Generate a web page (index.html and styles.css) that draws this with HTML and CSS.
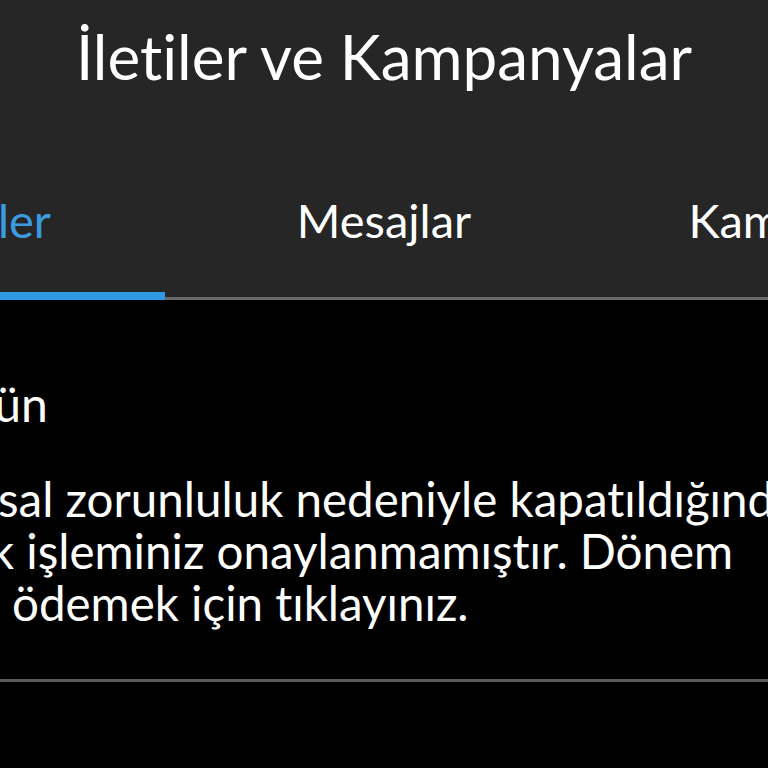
FILE: index.html
```html
<!DOCTYPE html>
<html lang="tr">
<head>
  <meta charset="UTF-8" />
  <meta name="viewport" content="width=device-width, initial-scale=1.0"/>
  <title>İletiler ve Kampanyalar</title>
  <link rel="stylesheet" href="styles.css">
</head>
<body>
  <div class="appbar">
    <div class="title">İletiler ve Kampanyalar</div>
    <div class="tabs">
      <div class="tab active">Bildirimler</div>
      <div class="tab">Mesajlar</div>
      <div class="tab">Kampanyalar</div>
    </div>
  </div>

  <div class="feed">
    <div class="day">Bugün</div>
    <div class="message">
      <div class="line first">sal zorunluluk nedeniyle kapatıldığından</div>
      <div class="line second">k işleminiz onaylanmamıştır. Dönem</div>
      <div class="line third">ödemek için tıklayınız.</div>
    </div>
  </div>
</body>
</html>
```

FILE: styles.css
```css
* { box-sizing: border-box; }

html, body {
  margin: 0;
  padding: 0;
  width: 768px;
  height: 768px;
  overflow: hidden;
  background: #000;
  color: #fff;
  font-family: Lato, 'Open Sans', sans-serif;
  font-variant-ligatures: none;
}

.appbar {
  background: #262626;
  height: 300px;
  display: flex;
  flex-direction: column;
}

.title {
  text-align: center;
  font-size: 62px;
  line-height: 1;
  padding-top: 25px;
  height: 120px;
}

.tabs {
  display: flex;
  margin-top: auto;
  margin-left: -273px;
  border-bottom: 3px solid #6a6a6a;
}

.tab {
  flex: 0 0 438px;
  text-align: center;
  font-size: 47px;
  line-height: 1;
  padding-bottom: 53px;
  white-space: nowrap;
  position: relative;
}

.tab.active {
  color: #3a9be0;
}

.tab.active::after {
  content: "";
  position: absolute;
  left: 0;
  right: 0;
  bottom: -3px;
  height: 8px;
  background: #2f9ae3;
}

.feed {
  border-bottom: 3px solid #5a5a5a;
  padding-bottom: 50px;
}

.day {
  font-size: 48px;
  line-height: 1;
  padding-top: 80px;
  margin-left: -88px;
}

.message {
  margin-top: 45px;
  font-size: 47.5px;
  line-height: 52px;
  white-space: nowrap;
}

.first { margin-left: -2px; }
.second { margin-left: -10px; }
.third { margin-left: 12px; }
```
